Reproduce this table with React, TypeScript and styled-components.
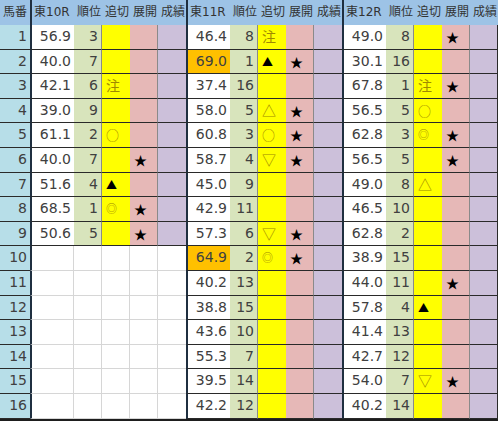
import { Fragment } from "react";
import styled, { createGlobalStyle } from "styled-components";

const GlobalStyle = createGlobalStyle`
  body {
    margin: 0;
    background: #ffffff;
    font-family: "DejaVu Sans", "Noto Sans CJK JP", sans-serif;
  }
`;

const Sheet = styled.div`
  display: grid;
  grid-template-columns: 30px repeat(3, 44px 28px 28px 28px 28px);
  grid-template-rows: 25px repeat(16, 24.6px);
  width: 498px;
  border-bottom: 2px solid #1e1e1e;
`;

const HeadCell = styled.div<{ $sep?: boolean }>`
  box-sizing: border-box;
  background: #9dc3e6;
  color: #333333;
  font-size: 12px;
  line-height: 25px;
  padding-left: ${(p) => (p.$sep ? "2px" : "3px")};
  white-space: nowrap;
  border-left: ${(p) => (p.$sep ? "2px solid #1f2f40" : "none")};
`;

const NumCell = styled.div`
  box-sizing: border-box;
  background: #b7dee8;
  color: #404040;
  font-size: 14px;
  text-align: right;
  padding-right: 3px;
  line-height: 23px;
  border-bottom: 1px solid #2a2a2a;
`;

const Cell = styled.div<{
  $bg: string;
  $dark: boolean;
  $sep?: boolean;
  $right?: boolean;
  $edge?: boolean;
}>`
  box-sizing: border-box;
  background: ${(p) => p.$bg};
  color: #404040;
  font-size: 14px;
  line-height: 23px;
  text-align: ${(p) => (p.$right ? "right" : "left")};
  padding: ${(p) => (p.$right ? "0 3px 0 0" : "0 0 0 4px")};
  border-bottom: 1px solid ${(p) => (p.$dark ? "#2a2a2a" : "#d6d6d6")};
  border-left: ${(p) => (p.$sep ? "2px solid #1f2f40" : "none")};
  border-right: ${(p) =>
    p.$edge ? "none" : `1px solid ${p.$dark ? "#8a8a8a" : "#d6d6d6"}`};
  white-space: nowrap;
`;

const Mark = styled.span<{ $color: string; $size: number }>`
  color: ${(p) => p.$color};
  font-size: ${(p) => p.$size}px;
  font-family: "Noto Sans CJK JP", "DejaVu Sans", sans-serif;
`;

type Row = { v: string; r: string; o?: string; t?: string; hl?: boolean };

const races: { name: string; rows: Row[] }[] = [
  {
    name: "東10R",
    rows: [
      { v: "56.9", r: "3" },
      { v: "40.0", r: "7" },
      { v: "42.1", r: "6", o: "注" },
      { v: "39.0", r: "9" },
      { v: "61.1", r: "2", o: "○" },
      { v: "40.0", r: "7", t: "★" },
      { v: "51.6", r: "4", o: "▲" },
      { v: "68.5", r: "1", o: "◎", t: "★" },
      { v: "50.6", r: "5", t: "★" },
    ],
  },
  {
    name: "東11R",
    rows: [
      { v: "46.4", r: "8", o: "注" },
      { v: "69.0", r: "1", o: "▲", t: "★", hl: true },
      { v: "37.4", r: "16" },
      { v: "58.0", r: "5", o: "△", t: "★" },
      { v: "60.8", r: "3", o: "○", t: "★" },
      { v: "58.7", r: "4", o: "▽", t: "★" },
      { v: "45.0", r: "9" },
      { v: "42.9", r: "11" },
      { v: "57.3", r: "6", o: "▽", t: "★" },
      { v: "64.9", r: "2", o: "◎", t: "★", hl: true },
      { v: "40.2", r: "13" },
      { v: "38.8", r: "15" },
      { v: "43.6", r: "10" },
      { v: "55.3", r: "7" },
      { v: "39.5", r: "14" },
      { v: "42.2", r: "12" },
    ],
  },
  {
    name: "東12R",
    rows: [
      { v: "49.0", r: "8", t: "★" },
      { v: "30.1", r: "16" },
      { v: "67.8", r: "1", o: "注", t: "★" },
      { v: "56.5", r: "5", o: "○" },
      { v: "62.8", r: "3", o: "◎", t: "★" },
      { v: "56.5", r: "5", t: "★" },
      { v: "49.0", r: "8", o: "△" },
      { v: "46.5", r: "10" },
      { v: "62.8", r: "2" },
      { v: "38.9", r: "15" },
      { v: "44.0", r: "11", t: "★" },
      { v: "57.8", r: "4", o: "▲" },
      { v: "41.4", r: "13" },
      { v: "42.7", r: "12" },
      { v: "54.0", r: "7", o: "▽", t: "★" },
      { v: "40.2", r: "14" },
    ],
  },
];

// black marks are solid; the others are drawn in a dark olive
function markStyle(m: string): { color: string; size: number } {
  if (m === "★") return { color: "#000000", size: 13 };
  if (m === "▲") return { color: "#000000", size: 11 };
  if (m === "◎") return { color: "#a08a00", size: 11 };
  if (m === "○") return { color: "#a08a00", size: 13 };
  return { color: "#a08a00", size: 14 };
}

function Symbol({ m }: { m?: string }) {
  if (!m) return null;
  const s = markStyle(m);
  return (
    <Mark $color={s.color} $size={s.size}>
      {m}
    </Mark>
  );
}

export default function App() {
  const lines = Array.from({ length: 16 }, (_, i) => i);
  return (
    <>
      <GlobalStyle />
      <Sheet>
        <HeadCell>馬番</HeadCell>
        {races.map((race) => (
          <Fragment key={race.name}>
            <HeadCell $sep>{race.name}</HeadCell>
            <HeadCell>順位</HeadCell>
            <HeadCell>追切</HeadCell>
            <HeadCell>展開</HeadCell>
            <HeadCell>成績</HeadCell>
          </Fragment>
        ))}
        {lines.map((i) => (
          <Fragment key={i}>
            <NumCell>{i + 1}</NumCell>
            {races.map((race, ri) => {
              const row = race.rows[i];
              const dark = !!row;
              const last = ri === races.length - 1;
              return (
                <Fragment key={race.name}>
                  <Cell
                    $bg={row?.hl ? "#ffc000" : "#ffffff"}
                    $dark={dark}
                    $sep
                    $right
                    $edge={dark}
                  >
                    {row?.v}
                  </Cell>
                  <Cell $bg={row ? "#d8e4bc" : "#ffffff"} $dark={dark} $right>
                    {row?.r}
                  </Cell>
                  <Cell $bg={row ? "#ffff00" : "#ffffff"} $dark={dark} $edge={dark}>
                    <Symbol m={row?.o} />
                  </Cell>
                  <Cell $bg={row ? "#e6b8b7" : "#ffffff"} $dark={dark}>
                    <Symbol m={row?.t} />
                  </Cell>
                  <Cell
                    $bg={row ? "#ccc0da" : "#ffffff"}
                    $dark={dark}
                    $edge={!last}
                    style={last && dark ? { borderRight: "1px solid #2a2a2a" } : undefined}
                  />
                </Fragment>
              );
            })}
          </Fragment>
        ))}
      </Sheet>
    </>
  );
}
